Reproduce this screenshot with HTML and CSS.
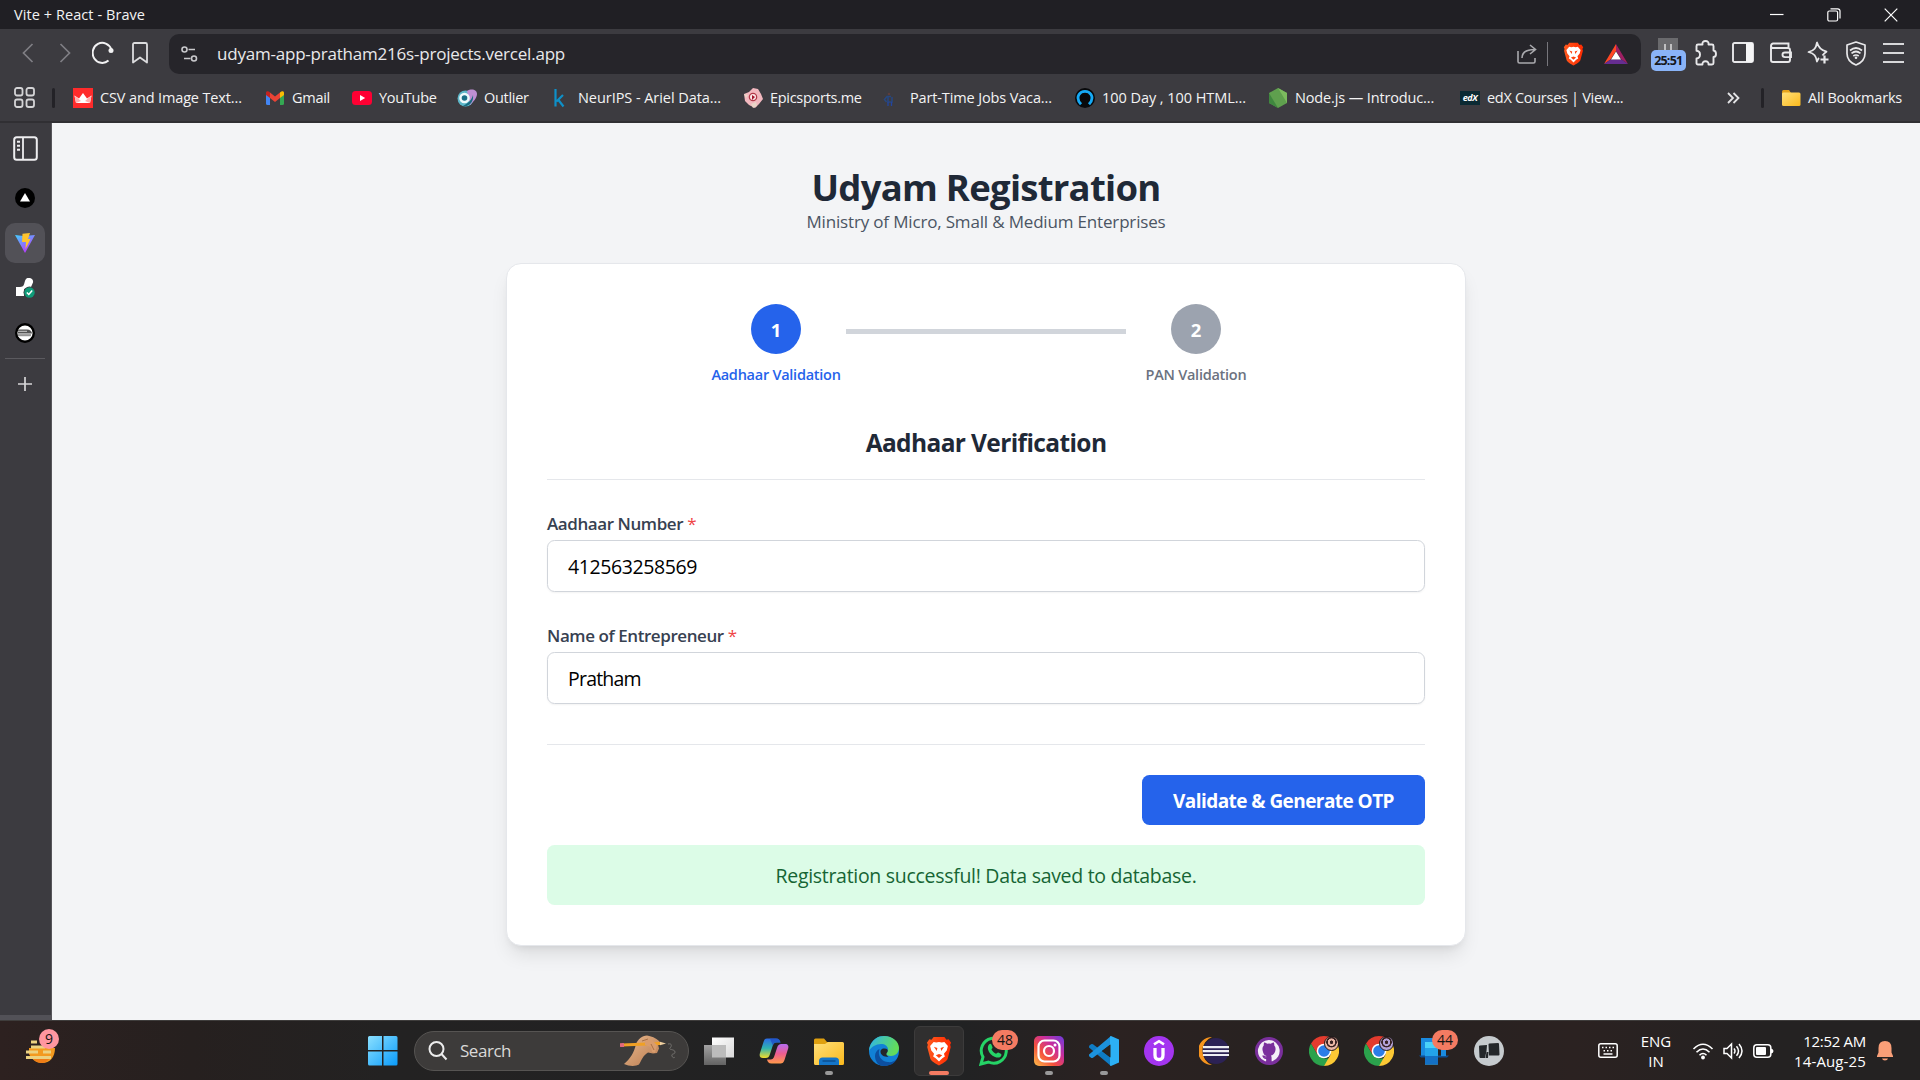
FILE: index.html
```html
<!DOCTYPE html>
<html lang="en">
<head>
<meta charset="utf-8">
<title>Vite + React - Brave</title>
<link rel="stylesheet" href="styles.css">
</head>
<body>
<svg width="0" height="0" class="defs" aria-hidden="true">
  <defs>
    <linearGradient id="gBrave" x1="0" y1="0" x2="1" y2="0"><stop offset="0" stop-color="#ff5a1f"/><stop offset="1" stop-color="#ff2a00"/></linearGradient>
    <linearGradient id="gWin" x1="0" y1="0" x2="1" y2="1"><stop offset="0" stop-color="#8be0ff"/><stop offset="1" stop-color="#0a9bfa"/></linearGradient>
    <linearGradient id="gVite" x1="0" y1="0" x2=".6" y2="1"><stop offset="0" stop-color="#41d1ff"/><stop offset="1" stop-color="#bd34fe"/></linearGradient>
    <linearGradient id="gFolder" x1="0" y1="0" x2="1" y2="1"><stop offset="0" stop-color="#ffe07a"/><stop offset="1" stop-color="#fbb91c"/></linearGradient>
    <linearGradient id="gInsta" x1="0" y1="1" x2="1" y2="0"><stop offset="0" stop-color="#ffc14a"/><stop offset=".35" stop-color="#f5523c"/><stop offset=".65" stop-color="#c92d9c"/><stop offset="1" stop-color="#6a3de0"/></linearGradient>
    <linearGradient id="gEdge" x1="0" y1="0" x2="1" y2=".3"><stop offset="0" stop-color="#2db4ee"/><stop offset="1" stop-color="#63dc5a"/></linearGradient>
    <linearGradient id="gCopA" x1="0" y1="0" x2="0" y2="1"><stop offset="0" stop-color="#2c6be8"/><stop offset=".5" stop-color="#2fb3b0"/><stop offset="1" stop-color="#f2dc2a"/></linearGradient>
    <linearGradient id="gCopB" x1="0" y1="0" x2="0" y2="1"><stop offset="0" stop-color="#b56cf0"/><stop offset=".5" stop-color="#ee5d90"/><stop offset="1" stop-color="#ff9a4a"/></linearGradient>
    <linearGradient id="gWhite" x1="0" y1="0" x2="1" y2="1"><stop offset="0" stop-color="#fff"/><stop offset="1" stop-color="#d9d9d9"/></linearGradient>
    <linearGradient id="gGray" x1="0" y1="0" x2="0" y2="1"><stop offset="0" stop-color="#a2a2a2"/><stop offset="1" stop-color="#636363"/></linearGradient>
    <linearGradient id="gHand" x1="0" y1="0" x2="1" y2="1"><stop offset="0" stop-color="#e9b98e"/><stop offset="1" stop-color="#b87a4e"/></linearGradient>
    <symbol id="brave" viewBox="0 0 24 28">
      <path fill="url(#gBrave)" d="M7 1h10l2 2.400 2-.400 2.300 3.200-.900 2 .600 2-3 11.200c-.500 1.700-5 4.600-8 6.100-3-1.500-7.500-4.400-8-6.100L1 10.200l.6-2-.9-2L3 3l2 .4z"/>
      <path fill="#fff" fill-rule="evenodd" d="M7 5.500l2.400.600L12 5.500l2.600.600 2.400-.600 3.300 3.800-1.100 4.200-2.600 3 .9 2.700-2.400 1.600L12 23.800l-3.100-3-2.400-1.600.9-2.700-2.600-3-1.100-4.200zM7.200 10l3.300 1.200-.6 2.800zM16.800 10l-3.300 1.200.6 2.800zM9 18l3-1.200 3 1.200-3 2.600z"/>
    </symbol>
    <symbol id="chrome" viewBox="0 0 30 30">
      <path fill="#e33b2e" d="M15 0a15 15 0 0 1 13 7.500H15L8.500 18.700 2 7.500A15 15 0 0 1 15 0z"/>
      <path fill="#2ba24c" d="M2 7.500l6.500 11.200L15 22.500h6.500L15 30A15 15 0 0 1 2 7.500z"/>
      <path fill="#fcc934" d="M28 7.500A15 15 0 0 1 15 30l6.500-11.250L21 10.500 15 7.500z"/>
      <circle cx="15" cy="15" r="7.300" fill="#fff"/><circle cx="15" cy="15" r="5.800" fill="#2b7de9"/>
    </symbol>
  </defs>
</svg>

<header class="titlebar">
  <span class="window-title">Vite + React - Brave</span>
  <div class="window-controls">
    <svg width="14" height="14" viewBox="0 0 14 14"><path d="M0 6.500h13.500" stroke="#fff" stroke-width="1.200"/></svg>
    <svg width="14" height="14" viewBox="0 0 14 14" fill="none" stroke="#fff" stroke-width="1.200"><rect x=".8" y="3" width="9.800" height="10" rx="1.500"/><path d="M3.500.800h7.200c1.400 0 2.300.900 2.300 2.300v7.400"/></svg>
    <svg width="14" height="14" viewBox="0 0 14 14"><path d="M.7.700l12.600 12.600M13.300.700L.7 13.300" stroke="#fff" stroke-width="1.200"/></svg>
  </div>
</header>

<nav class="toolbar">
  <div class="nav-buttons">
    <span class="slot"><svg width="12" height="20" viewBox="0 0 12 20" fill="none" stroke="#7f7e84" stroke-width="1.700"><path d="M10.500 1L1.500 10l9 9"/></svg></span>
    <span class="slot"><svg width="12" height="20" viewBox="0 0 12 20" fill="none" stroke="#7f7e84" stroke-width="1.700"><path d="M1.500 1l9 9-9 9"/></svg></span>
    <span class="slot"><svg width="22" height="24" viewBox="0 0 22 24" fill="none" stroke="#f2f2f3" stroke-width="2"><path d="M16.500 19.500A9.600 10 0 1 1 19.300 8.500"/><circle cx="19" cy="9.500" r="2.500" fill="#f2f2f3" stroke="none"/></svg></span>
    <span class="slot"><svg width="16" height="22" viewBox="0 0 16 22" fill="none" stroke="#dcdcde" stroke-width="1.800"><path d="M1 2.500Q1 1 2.500 1h11Q15 1 15 2.500V20.500l-7-5-7 5z" stroke-linejoin="round"/></svg></span>
  </div>
  <div class="address">
    <svg class="site-settings" width="17" height="16" viewBox="0 0 17 16" fill="none" stroke="#c9c9cc" stroke-width="1.600"><circle cx="3.500" cy="3.500" r="2.500"/><path d="M7.500 3.500H14M3 12.500h6.500"/><circle cx="13" cy="12.500" r="2.500"/></svg>
    <span class="url">udyam-app-pratham216s-projects.vercel.app</span>
    <svg width="20" height="20" viewBox="0 0 20 20" fill="none" stroke="#a9a9ad" stroke-width="1.600"><path d="M1 7v10.500Q1 19 2.500 19h14q1.500 0 1.500-1.500V14M5 14c0-6 4-8.500 13-8.500M13 1l5.500 4.500L13 10"/></svg>
    <i class="address-sep"></i>
    <svg class="shield" width="21" height="24"><use href="#brave"/></svg>
    <svg width="24" height="20" viewBox="0 0 24 20"><path fill="#ff4724" d="M12 0v7L6.500 15.500 0 20z"/><path fill="#9e1f63" d="M12 0v7l5.500 8.500L24 20z"/><path fill="#662d91" d="M0 20l6.500-4.500h11L24 20z"/><path fill="#fff" d="M12 7.500l5 8H7z"/></svg>
  </div>
  <div class="extensions">
    <span class="slot timer"><svg width="20" height="13" viewBox="0 0 20 13"><path fill="#6a6a6d" d="M0 0h20v13H0z"/><path d="M7 6v6M13 6v6" stroke="#ddd" stroke-width="1.500"/></svg><b>25:51</b></span>
    <span class="slot"><svg width="22" height="26" viewBox="0 0 22 26" fill="none" stroke="#e8e8ea" stroke-width="1.900" stroke-linejoin="round"><path d="M1.500 6q0-1.500 1.500-1.500h4.500C7 2 8.500 1 10.500 1S14 2 13.500 4.500H17q1.500 0 1.500 1.500v4.500c1.500.200 2.500 1.500 2.500 3.500s-1 3-2.500 3v6q0 1.500-1.500 1.500h-3.500c.3-2-1-3.200-3-3.200s-3.300 1.200-3 3.200H3q-1.500 0-1.500-1.500v-4.500c2-.200 3.500-1.500 3.500-4s-1.500-3.500-3.500-3.700z"/></svg></span>
    <span class="slot"><svg width="22" height="22" viewBox="0 0 22 22"><rect x="1" y="1" width="20" height="19" rx="1.500" fill="none" stroke="#e8e8ea" stroke-width="1.900"/><path fill="#f5f5f6" d="M14 1h7v19h-7z"/></svg></span>
    <span class="slot"><svg width="22" height="22" viewBox="0 0 22 22" fill="none" stroke="#e8e8ea" stroke-width="1.900"><path d="M1 4v14q0 2 2 2h15q2 0 2-2V8q0-2-2-2H3Q1 6 1 4t2-2.500h15.500V6M21 10.500h-6q-2.500 0-2.500 2.300t2.500 2.300h6z"/></svg></span>
    <span class="slot"><svg width="22" height="24" viewBox="0 0 22 24" fill="none" stroke="#e8e8ea" stroke-width="1.800" stroke-linejoin="round"><path d="M15.500 14.500c1-1.500 1.800-2.600 4-3.800-5.500-1.500-8-3.700-9.500-9.200C9 7 7.500 9.500 1.500 11c6 1.500 7.500 4 8.500 9.500.6-1.500 1-2.500 2-3.500"/><path d="M17.500 14.500v8M13.500 18.500h8" stroke-width="2.200"/></svg></span>
    <span class="slot"><svg width="20" height="25" viewBox="0 0 20 25" fill="none" stroke="#e8e8ea" stroke-width="1.700"><path d="M10 1l9 3v8.500c0 5.500-4 9.500-9 11.500-5-2-9-6-9-11.500V4z" stroke-linejoin="round"/><path d="M4 9.500q6-5 12 0M5.500 12.300q4.500-3.600 9 0M7.300 15q2.700-2 5.400 0"/><circle cx="10" cy="16.800" r="1.300" fill="#e8e8ea" stroke="none"/></svg></span>
    <span class="slot"><svg width="21" height="20" viewBox="0 0 21 20"><path d="M0 1h21M0 10h21M0 19h21" stroke="#d8d8da" stroke-width="1.800"/></svg></span>
  </div>
</nav>

<nav class="bookmarks-bar">
  <svg class="apps" width="21" height="21" viewBox="0 0 21 21" fill="none" stroke="#d4d4d6" stroke-width="1.800"><rect x="1" y="1" width="7.500" height="7.500" rx="2"/><rect x="12.500" y="1" width="7.500" height="7.500" rx="2"/><rect x="1" y="12.500" width="7.500" height="7.500" rx="2"/><rect x="12.500" y="12.500" width="7.500" height="7.500" rx="2"/></svg>
  <i class="bar-sep"></i>
  <ul class="bookmarks">
    <li><svg width="20" height="20" viewBox="0 0 20 20"><path fill="#ff2b2b" d="M0 0h20v20H0z"/><path fill="#fff" d="M3 15L1.500 7.500l4.500 3L10 5l4 5.500 4.500-3L17 15z"/><path fill="#ffb0b0" d="M3 15L1.500 7.500 8 13zM17 15l1.500-7.500L12 13z"/></svg><span>CSV and Image Text...</span></li>
    <li><svg width="20" height="20" viewBox="0 0 20 20"><path fill="#4285f4" d="M1 5l4 3v9H2.500Q1 17 1 15.500z"/><path fill="#34a853" d="M19 5l-4 3v9h2.500q1.500 0 1.500-1.500z"/><path fill="#ea4335" d="M5 4.500l5 4 5-4V10l-5 4-5-4z"/><path fill="#c5221f" d="M1 5c0-2 2-2.500 4-.500V10L1 7z"/><path fill="#fbbc04" d="M19 5c0-2-2-2.500-4-.500V10l4-3z"/></svg><span class="tight">Gmail</span></li>
    <li><svg width="20" height="20" viewBox="0 0 20 20"><rect y="3" width="20" height="14" rx="3.500" fill="#ff0033"/><path fill="#fff" d="M8 7l5.200 3L8 13z"/></svg><span class="tight">YouTube</span></li>
    <li><svg width="20" height="20" viewBox="0 0 20 20"><circle cx="8.500" cy="10.500" r="8" fill="#5db7c9"/><path fill="#bf8fd4" d="M10 3c5-3 10-1 10 3s-4 8-7 11z"/><path fill="#176a80" d="M6 18c6 1 11-4 10-11-1 4-4 8-10 11z"/><circle cx="7.500" cy="10" r="5.300" fill="#eefafc"/><circle cx="7.500" cy="10" r="2.800" fill="#196f87"/></svg><span class="tight">Outlier</span></li>
    <li><svg width="20" height="20" viewBox="0 0 20 20" fill="none" stroke="#0e90c8" stroke-width="2.200"><path d="M4.500 1v17.500M12 7L5.500 13.500M7 11.500l5.500 7"/></svg><span class="loose">NeurIPS - Ariel Data...</span></li>
    <li><svg width="20" height="20" viewBox="0 0 20 20"><path fill="#f2b8bf" d="M1 6l5-2 4-4 5 1 3 5 2 5-4 5-4 4-6-3-4-4z"/><path fill="#ead6c8" d="M8 16l5-2 1 4-4 2zM1 6l4 1-2 3z"/><circle cx="10" cy="9" r="4.300" fill="#b23a49"/><circle cx="10" cy="9" r="3" fill="#fbe9ea"/><path fill="#a5142b" d="M9 7l3 2-3 3z"/></svg><span class="tight">Epicsports.me</span></li>
    <li><svg width="20" height="20" viewBox="0 0 20 20" fill="none"><circle cx="6" cy="6" r="1.300" fill="#5d3d3b"/><path d="M8 8.500H4l-2.500 3L3.500 14M5 9v5h4V9" stroke="#27477f" stroke-width="1.600"/><path d="M5 14v4M8.500 14v4" stroke="#2345a0" stroke-width="1.300"/></svg><span>Part-Time Jobs Vaca...</span></li>
    <li><svg width="20" height="20" viewBox="0 0 20 20"><circle cx="10" cy="10" r="10" fill="#08090b"/><path d="M6 16.300C3 13 2.500 9 4 6.500 6.500 2.300 13.500 2.300 16 6.500c1.500 2.500 1 6.500-2 9.800" fill="none" stroke="#16a9f5" stroke-width="2.800"/></svg><span class="loose">100 Day , 100 HTML...</span></li>
    <li><svg width="20" height="20" viewBox="0 0 20 20"><path fill="#5fa04e" d="M10 0l9 5v10l-9 5-9-5V5z"/><path fill="#3f873f" d="M1 5l9 15-9-5z"/><path fill="#7cbb5e" d="M10 0l9 5v10z"/></svg><span>Node.js — Introduc...</span></li>
    <li><span class="edx">edX</span><span class="tight">edX Courses | View...</span></li>
  </ul>
  <svg class="more" width="13" height="12" viewBox="0 0 13 12" fill="none" stroke="#e4e4e6" stroke-width="1.800"><path d="M1 1l5 5-5 5M6.500 1l5 5-5 5"/></svg>
  <i class="bar-sep"></i>
  <svg class="folder" width="20" height="20" viewBox="0 0 20 20"><path fill="#e5a31b" d="M1 4q0-2 1.500-2H8l2 3h8v5H1z"/><rect x="1" y="4.500" width="18.500" height="13.500" rx="1.500" fill="url(#gFolder)"/></svg>
  <span class="all">All Bookmarks</span>
</nav>

<div class="window-body">
  <aside class="tabs">
    <span class="tab tall"><svg width="25" height="25" viewBox="0 0 25 25"><rect x="1.200" y="1.200" width="22.600" height="22.600" rx="2.500" fill="none" stroke="#eeeef0" stroke-width="2"/><path d="M10 1v23" stroke="#eeeef0" stroke-width="1.800"/><path d="M4 5.800h3M4 9.800h3M4 13.800h3" stroke="#eeeef0" stroke-width="2"/></svg></span>
    <span class="tab"><svg width="20" height="20" viewBox="0 0 20 20"><circle cx="10" cy="10" r="10" fill="#000"/><path fill="#fff" d="M10 5l5 8.500H5z"/></svg></span>
    <span class="tab active"><svg width="20" height="20" viewBox="0 0 20 20"><path fill="url(#gVite)" d="M0 2l8.500 1 11.500-1-10 18z"/><path fill="#ffc42e" d="M7.500.800L15 0l-2 6h2.500L10.500 16l.5-7H7z"/></svg></span>
    <span class="tab"><svg width="20" height="20" viewBox="0 0 20 20"><path fill="#fff" d="M1 9h4c4 0 4-3 5-6s3-3.500 5-3 3.500 2 3 4.500L16 9l-7 2v7H1z"/><circle cx="14.500" cy="14.500" r="6" fill="#3c3b40"/><circle cx="14.500" cy="14.500" r="5.200" fill="#0e9b78"/><path d="M11.800 14.500l2 2 3.400-4" fill="none" stroke="#fff" stroke-width="1.500"/></svg></span>
    <span class="tab"><svg width="20" height="20" viewBox="0 0 20 20"><circle cx="10" cy="10" r="8.800" fill="#fff" stroke="#000" stroke-width="2.400"/><path fill="#555" d="M3 6.500h9c3 0 5 2 5 4H3z"/><path d="M3 8.300h9M3 13h12.500" stroke="#ccc" stroke-width="1"/><path d="M3 12h13" stroke="#444" stroke-width="1"/></svg></span>
    <i class="tab-sep"></i>
    <span class="tab new"><svg width="14" height="14" viewBox="0 0 14 14"><path d="M7 0v14M0 7h14" stroke="#d6d6d8" stroke-width="1.700"/></svg></span>
  </aside>

  <main class="page">
    <h1>Udyam Registration</h1>
    <p class="subtitle">Ministry of Micro, Small &amp; Medium Enterprises</p>
    <section class="card">
      <div class="stepper">
        <div class="step current"><b>1</b><span>Aadhaar Validation</span></div>
        <i class="step-line"></i>
        <div class="step"><b>2</b><span>PAN Validation</span></div>
      </div>
      <h2>Aadhaar Verification</h2>
      <div class="field">
        <label>Aadhaar Number <em>*</em></label>
        <div class="input">412563258569</div>
      </div>
      <div class="field">
        <label>Name of Entrepreneur <em>*</em></label>
        <div class="input name">Pratham</div>
      </div>
      <div class="actions"><button type="button">Validate &amp; Generate OTP</button></div>
      <div class="alert">Registration successful! Data saved to database.</div>
    </section>
  </main>
</div>

<footer class="taskbar">
  <div class="widgets">
    <svg width="30" height="26" viewBox="0 0 30 26"><path fill="#f39a1f" d="M3 10h26c0 9-5 15-13 15-7 0-11-5-13-9z"/><path fill="#ef7d17" d="M5 18h20c-2 4-5 7-9 7-5 0-9-3-11-7z"/><path d="M5 4h6M5 9h14M0 14h12M17 14h8M0 19.500h25" stroke="#ecd281" stroke-width="2.800"/></svg>
    <span class="badge pink">9</span>
  </div>
  <svg class="start" width="30" height="30" viewBox="0 0 30 30"><path fill="url(#gWin)" d="M1.500 0H14v14H0V1.500Q0 0 1.500 0zM15.500 0H28q1.500 0 1.500 1.500V14h-14zM0 15.500h14v14H1.500Q0 29.500 0 28zM15.500 15.500h14V28q0 1.500-1.500 1.500H15.500z"/></svg>
  <div class="search">
    <svg width="20" height="20" viewBox="0 0 20 20" fill="none" stroke="#ececec" stroke-width="2"><circle cx="8.500" cy="8" r="7"/><path d="M13.500 13l5 5.500"/></svg>
    <span class="search-text">Search</span>
    <svg width="58" height="31" viewBox="0 0 58 31"><path fill="url(#gHand)" d="M4 29c6-5 10-11 12-20 2-5 6-8 11-8.500 4 .500 9 2.500 12 5.500 2 2 1 3.500-1 3.500l1 4-2 4.500-4 .500-5-1c-5 3-6 7-9 12-3 2-10 2-15-.500z"/><path d="M2 10l38-1.500" stroke="#f0a024" stroke-width="3.200"/><path d="M0 10.200l4-.200" stroke="#e2687c" stroke-width="3.800"/><path fill="#f0d0a0" d="M40 6.800l6 1.800-6 1.700z"/><path fill="#d99c6d" d="M25 5l7 0 5 5-2 8-3-1-1-5-6-2z"/><path d="M22 6l6-2M31 9l3 6" stroke="#a96f45" stroke-width="1" fill="none"/><path d="M48 9c4-1 4 2 2 4s5 1 5 4-4 1-3 4 3 1 3 1" fill="none" stroke="#74726f" stroke-width="1"/></svg>
  </div>
  <div class="apps-row">
    <span class="app"><svg width="30" height="30" viewBox="0 0 30 30"><path fill="url(#gWhite)" d="M8 1.500h22v20H8z"/><path fill="url(#gGray)" d="M0 9h22v20H0z"/><path fill="#bcbcbc" d="M8 9h14v12.500H8z"/></svg></span>
    <span class="app"><svg width="30" height="30" viewBox="0 0 30 30"><path fill="url(#gCopA)" d="M8 2.500h9c3 0 4 2 4.500 4h-4c-2 0-3 1-3.700 3L11 18c-1 3-2 4-4.500 4H4c-3 0-4-2-3-5L4.500 6C5.300 3.500 6 2.500 8 2.500z"/><path fill="#1d4fc4" d="M11 2.500h6c3 0 4 2 4.500 4h-4c-2 0-3 1-3.700 3z" opacity=".75"/><path fill="url(#gCopB)" d="M21.500 27.500h-9c-3 0-4-2-4.500-4h3.500c2 0 3-1 3.700-3L18 12c1-3 2-4 4.500-4H26c3 0 4 2 3 5l-3.500 11c-.8 2.500-2 3.500-4 3.500z"/></svg></span>
    <span class="app"><svg width="30" height="30" viewBox="0 0 30 30"><path fill="#dfa00f" d="M0 4q0-1.500 1.500-1.500H10l3 3.500h10v6H0z"/><path fill="url(#gFolder)" d="M0 8h11l3-2h14.500Q30 6 30 7.500v20q0 1.500-1.500 1.500h-27Q0 29 0 27.500z"/><path fill="#1475c8" d="M5 29v-4q0-3.500 3.500-3.500h13q3.500 0 3.500 3.500v4z"/><path d="M8.500 25h13" stroke="#0b4d8d" stroke-width="1.400"/></svg><i class="dot"></i></span>
    <span class="app"><svg width="30" height="30" viewBox="0 0 30 30"><circle cx="15" cy="15" r="15" fill="#1181d6"/><path fill="url(#gEdge)" d="M1 10C4 3 9 0 15 0c9 0 15 6 15 12 0 5-4 8-8 8-3 0-5-1-5-2.500S19 16 19 13.500C19 10 16 8 12 8 7 8 2 11 0 15q0-3 1-5z"/><path fill="#0c4fa0" d="M10.500 13c-2 6 1 12 8 13 4 .500 7-.500 9.500-3C25 28 20 30 15 30 9 30 6 25 6 20c0-3 2-6 4.500-7z"/><path fill="#24262a" d="M14 12.500c4-.500 5.500 1 4.500 3.500-2 2-1 3.500 1 4.500-5 1-8-2-8-5 0-1.500 1-2.500 2.500-3z"/></svg></span>
    <span class="app running"><svg width="26" height="30"><use href="#brave"/></svg><i class="dot wide"></i></span>
    <span class="app"><svg width="30" height="30" viewBox="0 0 30 30"><path d="M2 28l2-7A12.500 12.500 0 1 1 9.500 26z" fill="none" stroke="#25d366" stroke-width="3"/><path fill="#25d366" d="M10 8.500c1-1 2-.800 2.500.200l1 2.500c.3 1-1 1.500-1 2.300 1 2 2.500 3.300 4.500 4.200.8 0 1.500-1.500 2.300-1.200l2.500 1.200c1 .500.800 2-.300 3-1.500 1.300-3.500 1-5.500.300-3.500-1.500-6-4-7-7.500-.4-2 0-4 1-5z"/></svg><span class="badge">48</span></span>
    <span class="app"><svg width="30" height="30" viewBox="0 0 30 30"><rect width="30" height="30" rx="5" fill="url(#gInsta)"/><g fill="none" stroke="#fff" stroke-width="2.200"><rect x="4.500" y="4.500" width="21" height="21" rx="6"/><circle cx="15" cy="15" r="5"/></g><circle cx="21" cy="9" r="1.500" fill="#fff"/></svg><i class="dot"></i></span>
    <span class="app"><svg width="30" height="30" viewBox="0 0 30 30"><path fill="#0f7cc4" d="M0 11.500Q-.5 10.500.5 9.500L2 8.300q1-.600 2 0L22 22v8z"/><path fill="#1c92dd" d="M0 18.500q-.5 1 .5 2L2 21.700q1 .600 2 0L22 8V0z"/><path fill="#2cb0f5" d="M22 0l8 3.500v23L22 30q-.8-.200-1-1V1q.2-.800 1-1z"/><path fill="#29231f" d="M21.500 8.500v13L13 15z"/></svg><i class="dot"></i></span>
    <span class="app"><svg width="30" height="30" viewBox="0 0 30 30"><circle cx="15" cy="15" r="15" fill="#a435f0"/><path d="M10 8.300L15 5.200l5 3.100" fill="none" stroke="#fff" stroke-width="2.600"/><path d="M11 12v7q0 4.500 4 4.500t4-4.500v-7" fill="none" stroke="#fff" stroke-width="3.300"/></svg></span>
    <span class="app"><svg width="30" height="30" viewBox="0 0 30 30"><path fill="#f7941e" d="M13 1a14 14 0 0 0 0 28A15 15 0 0 1 13 1z"/><circle cx="17" cy="15" r="13" fill="#2c2255"/><path d="M4 11.200h26M3.700 15.200h26.600M4 19h26" stroke="#eeeef4" stroke-width="2.200"/></svg></span>
    <span class="app"><svg width="30" height="30" viewBox="0 0 30 30"><circle cx="15" cy="15" r="14" fill="#7a2f9c"/><path fill="#f4eef8" d="M15 5a10 10 0 0 0-3.500 19.400c.8.100 1-.300 1-.800v-2.400c-2.500.500-3.200-1-3.700-2l2-.200c.8 1 1.500.800 2.200.500.100-.700.400-1.100.7-1.400-3-.500-4.700-2-4.700-5 0-1.200.4-2.200 1.200-3 0-1 0-2 .4-2.800 1 0 2 .600 2.700 1.100q1.700-.400 3.400 0c.7-.500 1.700-1.100 2.700-1.100.4.800.4 1.800.4 2.800.8.800 1.200 1.800 1.200 3 0 3-1.700 4.500-4.700 5 .5.500.8 1.200.8 2.200v3.300c0 .5.200.900 1 .8A10 10 0 0 0 15 5z" transform="translate(-1.500 -1.500) scale(1.100)"/><path fill="#7a2f9c" d="M10.500 9.500q1.500 0 2.800 1.200 1.700-.400 3.400 0 1.300-1.200 2.800-1.200.5 1.300.2 2.700 1.300 1.300 1 3.500-.5 3.300-4.200 3.800 1 .8.900 2.500v3.500q-2.400.7-4.800 0v-2.500q-2 .3-3-1l-1.100-1.600q1.300-.3 2.200 1 .8.800 2 .4.100-.9.700-1.500-3.700-.5-4.200-4-.3-2.200 1-3.900-.2-1.600.3-2.900z"/></svg></span>
    <span class="app"><svg width="30" height="30"><use href="#chrome"/></svg><i class="profile peach"></i></span>
    <span class="app"><svg width="30" height="30"><use href="#chrome"/></svg><i class="profile lilac"></i></span>
    <span class="app"><svg width="30" height="30" viewBox="0 0 30 30"><path fill="#1a8be0" d="M2 2h16v19H2z"/><path fill="#0d4f94" d="M0 19.500h30l-2 2H2z"/><path fill="#49d2fa" d="M6 6h13v22q0 .500-1 .500H6z"/><path fill="#23a3ea" d="M6 12h13v8H6z"/><path fill="#1470c4" d="M6 20h13v8.500H6z"/><path fill="#1a8be0" d="M22 12h5v8h-5z"/></svg><span class="badge">44</span></span>
    <span class="app"><svg width="30" height="30" viewBox="0 0 30 30"><circle cx="15" cy="15" r="15" fill="#c6cbce"/><path fill="#23272a" d="M14.500 8.500q0-1 1-1l8.500-.5q1 0 1 1l.5 10.500q0 1-1 1H15zM5 10.500q0-1 1-1l7-.5-.5 6L11 22H6.500q-1 0-1-1z"/><path fill="#23272a" d="M12.500 16h2l-.5 6h-2.500z"/></svg></span>
  </div>
  <div class="tray">
    <svg width="20" height="15" viewBox="0 0 20 15" fill="none" stroke="#fff" stroke-width="1.500"><rect x=".8" y=".8" width="18.400" height="13.400" rx="2"/><path d="M4 4.500h12" stroke-dasharray="1.500 2"/><path d="M5.500 7.800h9" stroke-dasharray="1.500 2"/><path d="M5.500 11h9"/></svg>
    <div class="lang"><span>ENG</span><span>IN</span></div>
    <svg width="22" height="18" viewBox="0 0 22 18" fill="none" stroke="#fff" stroke-width="1.600"><path d="M1.500 7q9.500-9.500 19 0M4.500 10.200q6.500-6.500 13 0M7.500 13.200q3.500-3.500 7 0"/><circle cx="11" cy="15.500" r="1.900" fill="#fff" stroke="none"/></svg>
    <svg class="speaker" width="21" height="18" viewBox="0 0 21 18" fill="none" stroke="#fff" stroke-width="1.500"><path d="M1 6.500h3L8.500 2v14L4 11.500H1zM11 6.500q2 2.500 0 5M13.500 4.200q4 4.800 0 9.600M16 2q6 7 0 14"/></svg>
    <svg class="battery" width="21" height="14" viewBox="0 0 21 14"><rect x=".8" y=".8" width="17" height="12.400" rx="3" fill="none" stroke="#fff" stroke-width="1.500"/><rect x="3" y="3" width="10" height="8" rx="1" fill="#fff"/><path fill="#fff" d="M18 4.500q2.500.500 2.500 2.500T18 9.500z"/></svg>
    <div class="clock"><span class="tight">12:52 AM</span><span class="date">14-Aug-25</span></div>
    <svg width="18" height="20" viewBox="0 0 18 20"><path fill="#f99f78" d="M9 0q6.500 0 6.500 7v4.500L17 15v1H1v-1l1.500-3.500V7Q2.500 0 9 0zM6 17.500h6q-.5 2-3 2t-3-2z"/></svg>
  </div>
</footer>
</body>
</html>
```
FILE: styles.css
```css
* { box-sizing: border-box; }
body { margin: 0; width: 1920px; height: 1080px; overflow: hidden; display: flex; flex-direction: column; font-family: "Open Sans", "Noto Sans", sans-serif; color: #f3f3f4; background: #3c3b40; white-space: nowrap; }
svg { display: block; flex: none; }
i { font-style: normal; }
.defs { position: absolute; }

.titlebar { height: 29px; background: #201f24; display: flex; justify-content: space-between; align-items: center; padding: 0 22px 0 14px; font-size: 14.5px; letter-spacing: .07px; }
.window-controls { display: flex; gap: 43px; }

.toolbar { height: 50px; display: flex; align-items: center; padding: 0 8px 2px 9px; }
.nav-buttons, .extensions { display: flex; }
.slot { width: 37.5px; display: flex; justify-content: center; align-items: center; }
.address { flex: 1; height: 40px; margin: 2px 9px 0 10px; padding: 0 13px 0 12px; border-radius: 10px; background: #26252a; display: flex; align-items: center; font-size: 17px; }
.url { flex: 1; margin-left: 19px; padding-bottom: 2px; color: #e9e9ea; letter-spacing: -.214px; }
.address-sep { width: 1px; height: 24px; background: #77767c; margin: 0 15px 0 10px; }
.shield { margin-right: 20px; }
.timer { flex-direction: column; height: 30px; justify-content: flex-start; }
.timer b { width: 35px; height: 21px; margin-top: -1px; border-radius: 5px; background: #8ab4f8; color: #16181c; font-size: 12.500px; line-height: 21px; text-align: center; font-weight: 700; letter-spacing: -.8px; flex: none; }

.bookmarks-bar { height: 44px; border-bottom: 2px solid #302f33; display: flex; align-items: center; padding-left: 14px; padding-bottom: 5px; font-size: 14.5px; letter-spacing: -.135px; }
.bookmarks-bar span { padding-bottom: 1px; }
.bar-sep { width: 3px; height: 20px; border-radius: 2px; background: #232227; }
.apps { margin-right: 17px; }
.bookmarks { list-style: none; margin: 0 0 0 18px; padding: 0; width: 1654px; display: grid; grid-template-columns: 192px 87px 105px 94px 192px 140px 192px 193px 192px 267px; }
.bookmarks li { display: flex; align-items: center; gap: 7px; }
.tight { letter-spacing: -.29px; }
.loose { letter-spacing: -.055px; }
.edx { width: 20px; height: 14px; background: #0b2a33; color: #fff; font: italic 700 9px/13px "Open Sans", sans-serif; text-align: center; letter-spacing: -.5px; }
.more { margin-right: 21px; }
.folder { margin: 0 7px 0 17px; }
.all { letter-spacing: -.2px; }

.window-body { height: 897px; display: flex; }
.tabs { width: 52px; padding-right: 1px; border-right: 1px solid #56555a; border-bottom: 5px solid #525157; display: flex; flex-direction: column; align-items: center; }
.tab { width: 40px; height: 40px; margin-bottom: 5px; display: flex; align-items: center; justify-content: center; border-radius: 10px; }
.tab.tall { height: 50px; }
.tab.active { background: #525157; }
.tab-sep { width: 40px; height: 1px; background: #5b5a5f; }
.tab.new { margin-top: 5px; }

.page { flex: 1; background: #f3f4f6; color: #1f2937; padding-top: 42px; display: flex; flex-direction: column; align-items: center; }
h1 { margin: 0; font-size: 36.500px; line-height: 45px; font-weight: 700; letter-spacing: -.74px; }
.subtitle { margin: 0 0 29px; font-size: 17px; line-height: 24px; color: #4b5563; letter-spacing: -.17px; }
.card { width: 960px; height: 683px; padding: 40px; background: #fff; border: 1px solid #e5e7eb; border-radius: 15px; box-shadow: 0 12px 19px -4px rgba(0,0,0,.1), 0 5px 8px -5px rgba(0,0,0,.1); }
.stepper { display: flex; justify-content: center; }
.step { width: 140px; display: flex; flex-direction: column; align-items: center; gap: 11px; font-size: 14.500px; line-height: 20px; font-weight: 600; color: #6b7280; letter-spacing: -.26px; }
.step b { width: 50px; height: 50px; border-radius: 50%; background: #9ca3af; color: #fff; font-size: 18.500px; line-height: 51px; text-align: center; font-weight: 700; }
.step.current { color: #2563eb; }
.step.current b { background: #2563eb; }
.step-line { width: 280px; height: 5px; margin-top: 25px; background: #d1d5db; }
h2 { margin: 40px 0 32px; height: 55px; border-bottom: 1px solid #e5e7eb; font-size: 24.500px; line-height: 36px; font-weight: 700; text-align: center; letter-spacing: -.62px; }
.field { margin-bottom: 32px; }
.field label { display: block; height: 28px; font-size: 17px; line-height: 23px; font-weight: 600; color: #374151; letter-spacing: -.42px; }
.field em { font-style: normal; font-weight: 400; color: #ef4444; }
.input { height: 52px; padding: 0 20px; border: 1px solid #d1d5db; border-radius: 7.5px; box-shadow: 0 1px 2px rgba(0,0,0,.05); font-size: 19.500px; line-height: 52px; color: #000; letter-spacing: -.4px; }
.input.name { letter-spacing: -.78px; }
.actions { margin-top: 40px; padding-top: 30px; border-top: 1px solid #e5e7eb; display: flex; justify-content: flex-end; }
.actions button { width: 283px; height: 50px; border: 0; border-radius: 7.5px; background: #2563eb; color: #fff; font: 700 19px/52px "Open Sans", "Noto Sans", sans-serif; padding: 0; letter-spacing: -.56px; }
.alert { height: 60px; margin-top: 20px; border-radius: 7.5px; background: #dcfce7; color: #166534; font-size: 19.500px; line-height: 62px; text-align: center; letter-spacing: -.3px; }

.taskbar { height: 60px; border-top: 1px solid #3f3d3c; background: linear-gradient(90deg, #2d2120 0, #26201f 10%, #232222 20%, #212223 50%, #2b2221 58%, #262221 70%, #2b2221 82%, #242222 92%); display: flex; align-items: center; }
.widgets { width: 342px; margin-left: 26px; position: relative; }
.badge { position: absolute; display: block; height: 20px; padding: 0 6px; border-radius: 10px; background: #f47b62; color: #141414; font-size: 14px; line-height: 20px; right: -8px; top: -6px; }
.badge.pink { background: #ff96a0; left: 13px; top: -9px; right: auto; width: 20px; }
.search { width: 275px; height: 40px; margin: 0 15px 0 16px; padding: 0 10px 0 13px; border: 1px solid #565452; border-radius: 20px; background: #3d3b3a; display: flex; align-items: center; }
.search-text { flex: 1; margin-left: 12px; font-size: 17px; color: #dad9d8; letter-spacing: -.47px; }
.apps-row { display: flex; width: 894px; }
.app { width: 30px; height: 50px; margin-right: 25px; display: flex; align-items: center; justify-content: center; position: relative; flex: none; }
.app .badge { top: 4px; left: 13px; right: auto; width: 26px; padding: 0; text-align: center; }
.dot { position: absolute; left: 11px; bottom: 1px; width: 8px; height: 4px; border-radius: 2px; background: #999; }
.dot.wide { left: 14px; bottom: 0; width: 20px; background: #f47b62; }
.app.running { width: 50px; margin: 0 15px 0 -10px; border-radius: 6px; background: #302f2f; border: 1px solid #3c3b3b; }
.profile { position: absolute; right: 0; top: 10px; width: 15px; height: 15px; border-radius: 50%; border: 1px solid #201a1a; background: radial-gradient(circle at 50% 40%, #392324 0 1.500px, var(--tone) 2px 3.500px, #392324 4px 5px, var(--tone) 5.500px); }
.peach { --tone: #e9b5a4; }
.lilac { --tone: #b3a2d6; }
.tray { display: flex; align-items: center; font-size: 15px; line-height: 20px; color: #fff; }
.lang { width: 50px; margin: 0 11px 0 13px; text-align: center; display: flex; flex-direction: column; }
.speaker { margin-left: 9px; }
.battery { margin: 0 0 0 9px; }
.clock { width: 92px; margin-right: 10px; display: flex; flex-direction: column; align-items: flex-end; }
.date { letter-spacing: .13px; }
```
